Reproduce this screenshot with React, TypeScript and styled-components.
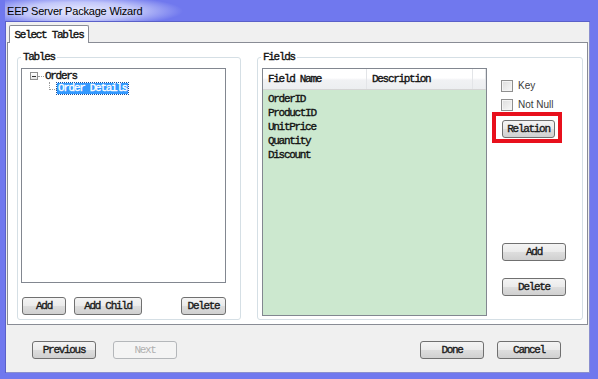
import React from 'react';
import styled, { createGlobalStyle } from 'styled-components';

const MONO = `'Liberation Mono', 'DejaVu Sans Mono', monospace`;
const SANS = `'Liberation Sans', Arial, sans-serif`;
const FRAME = '#7078ee';

const GlobalStyle = createGlobalStyle`
  html, body {
    margin: 0;
    padding: 0;
    background: #ffffff;
  }
  * {
    box-sizing: border-box;
  }
`;

// shared look of the SimSun-like ascii text used all over the dialog
const monoText = `
  font-family: ${MONO};
  font-size: 11px;
  letter-spacing: -1.3px;
  -webkit-text-stroke: 0.35px currentColor;
`;

const Window = styled.div`
  width: 598px;
  height: 379px;
  display: flex;
  flex-direction: column;
  background: ${FRAME};
  border-left: 5px solid ${FRAME};
  border-right: 8px solid ${FRAME};
  border-bottom: 6px solid ${FRAME};
  overflow: hidden;
`;

const TitleBar = styled.div`
  height: 22px;
  margin-left: -5px;
  padding-left: 7px;
  display: flex;
  align-items: center;
  background: radial-gradient(ellipse 105px 16px at 78px 11px, rgba(236, 238, 255, 0.97), rgba(214, 218, 252, 0.8) 55%, rgba(214, 218, 252, 0) 100%),
    ${FRAME};
  border-bottom: 1px solid #5a60c8;
  font-family: ${SANS};
  font-size: 11px;
  letter-spacing: -0.2px;
  color: #000;
`;

const Client = styled.div`
  flex: 1;
  display: flex;
  flex-direction: column;
  background: #f0f0f0;
  box-shadow: inset 1px 0 0 #5a60c8, inset -1px 0 0 #8a8fd0, inset 0 -1px 0 #8a8fd0;
`;

const TabStrip = styled.div`
  height: 20px;
  padding: 3px 0 0 4px;
  display: flex;
  align-items: flex-end;
`;

const Tab = styled.div`
  position: relative;
  z-index: 1;
  height: 18px;
  width: 80px;
  margin-bottom: -1px;
  display: flex;
  align-items: center;
  justify-content: center;
  background: #ffffff;
  border: 1px solid #898c95;
  border-bottom: none;
  border-radius: 2px 2px 0 0;
  ${monoText}
  color: #111;
`;

const TabPage = styled.div`
  height: 283px;
  margin: 0 2px;
  padding: 14px 4px 0 9px;
  display: flex;
  gap: 16px;
  background: #ffffff;
  border: 1px solid #898c95;
`;

const GroupBox = styled.div<{ $width: number }>`
  position: relative;
  width: ${(p) => p.$width}px;
  height: 263px;
  border: 1px solid #d5dfe5;
  border-radius: 3px;
  display: flex;
`;

const GroupTitle = styled.span`
  position: absolute;
  top: -8px;
  left: 3px;
  padding: 0 2px;
  background: #ffffff;
  line-height: 14px;
  ${monoText}
  color: #111;
`;

const TablesColumn = styled.div`
  flex: 1;
  display: flex;
  flex-direction: column;
  padding: 10px 14px 0 3px;
`;

const TreeBox = styled.div`
  height: 215px;
  border: 1px solid #828790;
  background: #ffffff;
  padding-top: 1px;
`;

const TreeRow = styled.div<{ $indent: number }>`
  height: 12px;
  display: flex;
  align-items: center;
  padding-left: ${(p) => p.$indent}px;
  ${monoText}
  color: #111;
`;

const Expander = styled.span`
  width: 8px;
  height: 8px;
  border: 1px solid #919191;
  background: linear-gradient(#ffffff, #e6e6e6);
  display: flex;
  align-items: center;
  justify-content: center;

  &::before {
    content: '';
    width: 4px;
    height: 1px;
    background: #333;
  }
`;

const DotLine = styled.span`
  width: 6px;
  border-top: 1px dotted #9a9a9a;
`;

const Elbow = styled.span`
  align-self: flex-start;
  width: 8px;
  height: 8px;
  border-left: 1px dotted #9a9a9a;
  border-bottom: 1px dotted #9a9a9a;
`;

const NodeLabel = styled.span<{ $selected?: boolean }>`
  height: 11px;
  line-height: 11px;
  padding: 0 1px;
  background: ${(p) => (p.$selected ? '#3399ff' : 'transparent')};
  color: ${(p) => (p.$selected ? '#ffffff' : '#111')};
  outline: ${(p) => (p.$selected ? '1px dotted #1a4f9c' : 'none')};
`;

const ButtonRow = styled.div`
  margin-top: 14px;
  padding-left: 1px;
  display: flex;
  gap: 8px;
`;

const Button = styled.button<{ $width: number }>`
  width: ${(p) => p.$width}px;
  height: 18px;
  padding: 0;
  border: 1px solid #707070;
  border-radius: 3px;
  background: linear-gradient(#f4f4f4 0%, #ebebeb 48%, #dddddd 52%, #d0d0d0 100%);
  ${monoText}
  color: #1a1a1a;

  &:disabled {
    border-color: #b4b7ba;
    background: #f4f4f4;
    color: #b0b0b0;
    -webkit-text-stroke: 0;
  }
`;

const PushRight = styled.div`
  margin-left: auto;
  display: flex;
`;

const FieldsBody = styled.div`
  flex: 1;
  display: flex;
  padding: 10px 0 0 4px;
`;

const ListView = styled.div`
  width: 225px;
  height: 248px;
  border: 1px solid #828790;
  background: #cce8cf;
  display: flex;
  flex-direction: column;
`;

const ListHeader = styled.div`
  height: 21px;
  display: flex;
  background: linear-gradient(#ffffff 0%, #ffffff 45%, #f1f2f4 55%, #eceef0 100%);
  border-bottom: 1px solid #d5d5d5;
`;

const HeaderCell = styled.div<{ $width?: number }>`
  ${(p) => (p.$width ? `width: ${p.$width}px;` : 'flex: 1;')}
  display: flex;
  align-items: center;
  padding-left: 5px;
  border-right: 1px solid #e3e5e8;
  ${monoText}
  color: #111;
`;

const ListRows = styled.div`
  padding: 2px 0 0 5px;
`;

const ListRow = styled.div`
  height: 14px;
  line-height: 14px;
  ${monoText}
  color: #111;
`;

const SidePanel = styled.div`
  display: flex;
  flex-direction: column;
  padding: 12px 0 0 5px;
`;

const CheckRow = styled.label`
  height: 11px;
  margin: 0 0 8px 9px;
  display: flex;
  align-items: center;
  gap: 5px;
  font-family: ${SANS};
  font-size: 10px;
  color: #3a3a3a;
`;

const CheckBox = styled.span`
  width: 12px;
  height: 12px;
  border: 1px solid #8f8f8f;
  background: linear-gradient(135deg, #dcdcdc, #f8f8f8);
  box-shadow: inset 0 0 0 1px #f4f4f4;
`;

const Highlight = styled.div`
  width: 70px;
  height: 31px;
  margin-top: -6px;
  padding: 2px 0 0 6px;
  border: 4px solid #e8101c;
`;

const SideButton = styled(Button)<{ $gap: number }>`
  margin: ${(p) => p.$gap}px 0 0 10px;
`;

const Footer = styled.div`
  flex: 1;
  display: flex;
  padding: 16px 29px 0 27px;
  gap: 17px;
`;

const FooterRight = styled.div`
  margin-left: auto;
  display: flex;
  gap: 13px;
`;

const fields = ['OrderID', 'ProductID', 'UnitPrice', 'Quantity', 'Discount'];

export default function App() {
  return (
    <>
      <GlobalStyle />
      <Window>
        <TitleBar>EEP Server Package Wizard</TitleBar>
        <Client>
          <TabStrip>
            <Tab>Select Tables</Tab>
          </TabStrip>
          <TabPage>
            <GroupBox $width={224}>
              <GroupTitle>Tables</GroupTitle>
              <TablesColumn>
                <TreeBox>
                  <TreeRow $indent={8}>
                    <Expander />
                    <DotLine />
                    <NodeLabel>Orders</NodeLabel>
                  </TreeRow>
                  <TreeRow $indent={27}>
                    <Elbow />
                    <NodeLabel $selected>Order Details</NodeLabel>
                  </TreeRow>
                </TreeBox>
                <ButtonRow>
                  <Button $width={44}>Add</Button>
                  <Button $width={68}>Add Child</Button>
                  <PushRight>
                    <Button $width={45}>Delete</Button>
                  </PushRight>
                </ButtonRow>
              </TablesColumn>
            </GroupBox>
            <GroupBox $width={326}>
              <GroupTitle>Fields</GroupTitle>
              <FieldsBody>
                <ListView>
                  <ListHeader>
                    <HeaderCell $width={104}>Field Name</HeaderCell>
                    <HeaderCell $width={106}>Description</HeaderCell>
                    <HeaderCell />
                  </ListHeader>
                  <ListRows>
                    {fields.map((f) => (
                      <ListRow key={f}>{f}</ListRow>
                    ))}
                  </ListRows>
                </ListView>
                <SidePanel>
                  <CheckRow>
                    <CheckBox />
                    Key
                  </CheckRow>
                  <CheckRow>
                    <CheckBox />
                    Not Null
                  </CheckRow>
                  <Highlight>
                    <Button $width={53}>Relation</Button>
                  </Highlight>
                  <SideButton $width={64} $gap={100}>
                    Add
                  </SideButton>
                  <SideButton $width={64} $gap={17}>
                    Delete
                  </SideButton>
                </SidePanel>
              </FieldsBody>
            </GroupBox>
          </TabPage>
          <Footer>
            <Button $width={64}>Previous</Button>
            <Button $width={64} disabled>
              Next
            </Button>
            <FooterRight>
              <Button $width={64}>Done</Button>
              <Button $width={64}>Cancel</Button>
            </FooterRight>
          </Footer>
        </Client>
      </Window>
    </>
  );
}
